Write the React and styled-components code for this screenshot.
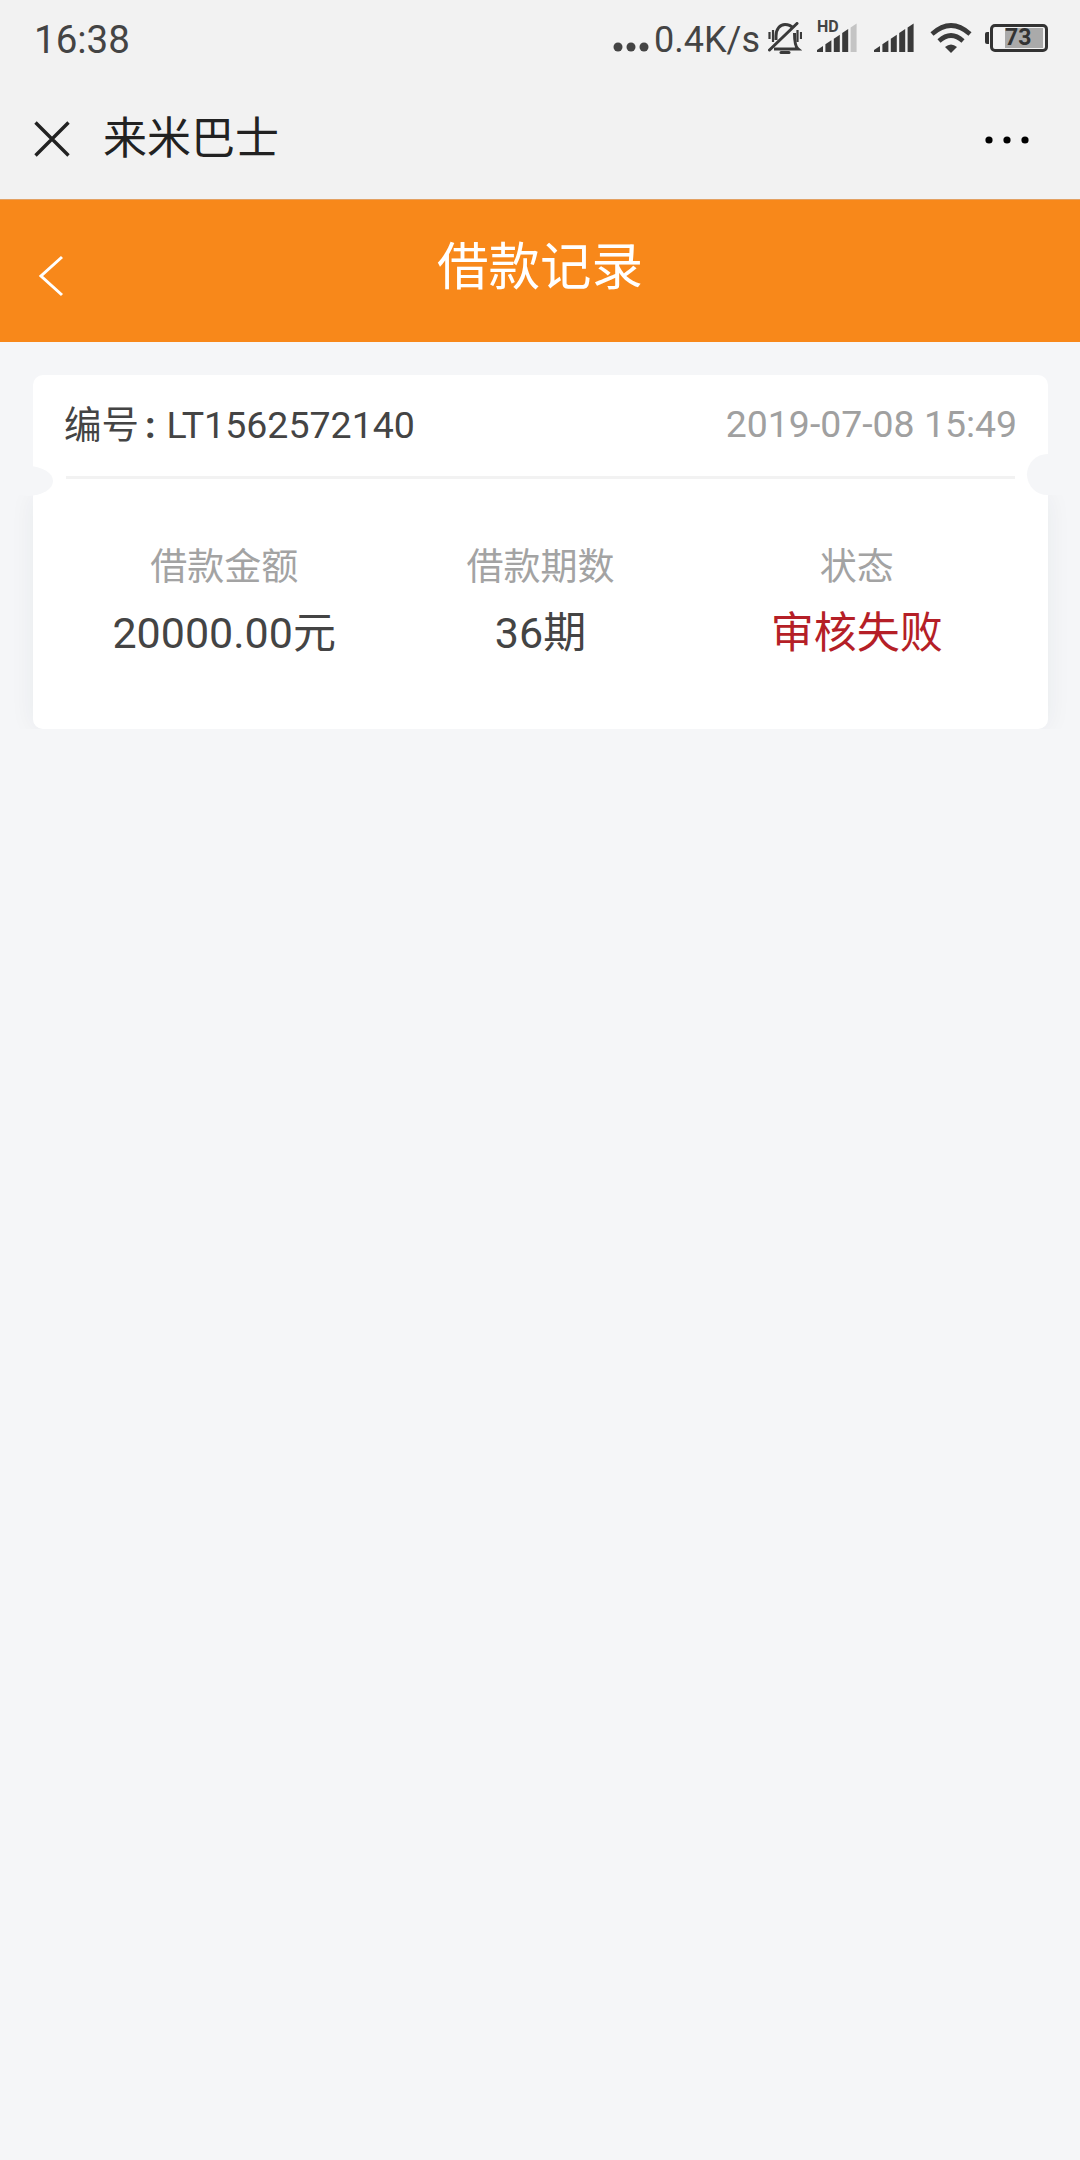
import React from "react";
import styled, { createGlobalStyle } from "styled-components";

const GlobalStyle = createGlobalStyle`
  html, body {
    margin: 0;
    padding: 0;
    background: #f5f6f8;
  }
  body {
    font-family: Roboto, "Noto Sans CJK SC", sans-serif;
  }
`;

const Page = styled.div`
  width: 1080px;
  min-height: 2160px;
  background: #f5f6f8;
  overflow: hidden;
`;

const TopArea = styled.div`
  background: #f2f2f2;
  height: 199px;
  display: flex;
  flex-direction: column;
`;

const StatusBar = styled.div`
  height: 80px;
  display: flex;
  align-items: center;
  justify-content: space-between;
  padding: 0 32px 0 34px;
  color: #444;
`;

const Clock = styled.div`
  font-size: 38.5px;
  line-height: 80px;
`;

const StatusIcons = styled.div`
  display: flex;
  align-items: center;
  height: 80px;
`;

const Speed = styled.span`
  font-size: 36px;
  line-height: 80px;
  margin-left: 5px;
`;

const Glyph = styled.svg`
  display: block;
  flex: none;
  margin-left: ${(p) => p.$ml || 0}px;
  margin-top: ${(p) => p.$mt || 0}px;
`;

const HdSignal = styled.div`
  position: relative;
  margin-left: 15px;
  width: 41px;
  height: 30px;
  margin-top: -4px;
`;

const HdTag = styled.span`
  position: absolute;
  left: 0;
  top: -3px;
  font-size: 16px;
  line-height: 14px;
  font-weight: 700;
  color: #444;
`;

const BatteryWrap = styled.div`
  display: flex;
  align-items: center;
  margin-left: 13px;
  margin-top: -5px;
`;

const BatteryNub = styled.div`
  width: 4px;
  height: 12px;
  background: #333;
  border-radius: 2px 0 0 2px;
  margin-right: 1px;
`;

const BatteryBody = styled.div`
  box-sizing: border-box;
  width: 58px;
  height: 28px;
  border: 3px solid #333;
  border-radius: 5px;
  display: flex;
  align-items: center;
  justify-content: flex-end;
  padding-right: 2px;
`;

const BatteryFill = styled.div`
  width: 38px;
  height: 20px;
  background: #aaa;
  color: #333;
  font-size: 23px;
  line-height: 20px;
  font-weight: 700;
`;

const NavRow = styled.div`
  flex: 1;
  display: flex;
  align-items: center;
  padding: 0 51px 0 34px;
  margin-top: -2px;
`;

const NavTitle = styled.div`
  flex: 1;
  margin-left: 33px;
  font-size: 44px;
  line-height: 60px;
  color: #222;
`;

const OrangeBar = styled.div`
  position: relative;
  height: 143px;
  box-sizing: border-box;
  border-top: 1px solid #e3a163;
  background: #f8881a;
  display: flex;
  justify-content: center;
  padding-top: 35px;
`;

const BarTitle = styled.div`
  font-size: 51.5px;
  line-height: 66px;
  color: #fff;
`;

const BackIcon = styled.svg`
  position: absolute;
  left: 38px;
  top: 55px;
`;

const Card = styled.div`
  position: relative;
  isolation: isolate;
  margin: 33px 32px 0 33px;
`;

const CardHead = styled.div`
  position: relative;
  z-index: 1;
  background: #fff;
  border-radius: 10px 10px 0 0;
  height: 102px;
  display: flex;
  align-items: center;
  justify-content: space-between;
  padding: 0 31px 0 31px;
`;

const Serial = styled.div`
  font-size: 37.5px;
  line-height: 50px;
  color: #444;
  margin-top: -2px;
`;

const Colon = styled.span`
  font-weight: 700;
  margin: 0 11px 0 6px;
`;

const DateText = styled.div`
  font-size: 37.4px;
  line-height: 50px;
  color: #a0a0a0;
  margin-top: -4px;
`;

const Divider = styled.div`
  position: absolute;
  left: 33px;
  right: 33px;
  top: 101px;
  height: 3px;
  background: #f2f2f2;
  z-index: 2;
`;

const Notch = styled.div`
  position: absolute;
  z-index: 3;
  background: #f5f6f8;
  border-radius: 50%;
  top: ${(p) => p.$top}px;
  height: ${(p) => p.$size}px;
  width: ${(p) => p.$w}px;
  ${(p) => (p.$side === "left" ? "left: -30px;" : "right: -20px;")}
`;

const CardBody = styled.div`
  background: #fff;
  border-radius: 0 0 10px 10px;
  height: 252px;
  box-sizing: border-box;
  padding: 66px 33px 0;
  display: grid;
  grid-template-columns: repeat(3, 1fr);

  /* soft side shadow, only below the notches */
  &::before {
    content: "";
    position: absolute;
    z-index: -1;
    left: 0;
    right: 0;
    top: 120px;
    bottom: 0;
    border-radius: 0 0 10px 10px;
    box-shadow: 0 0 26px rgba(40, 50, 70, 0.06);
    clip-path: inset(0 -40px 0 -40px);
  }
`;

const Col = styled.div`
  text-align: center;
`;

const ColLabel = styled.div`
  font-size: 37px;
  line-height: 50px;
  color: #a3a3a3;
`;

const ColValue = styled.div`
  font-size: 43px;
  line-height: 56px;
  margin-top: 12px;
  color: ${(p) => (p.$failed ? "#b51f27" : "#444")};
`;

// signal bars share one slope, the left one is only a small wedge
const barPoints = (i) => {
  const x0 = i * 8.4;
  const x1 = x0 + 6;
  const top = (x) => 27 - x * 0.67;
  return `${x0},29 ${x0},${top(x0)} ${x1},${top(x1)} ${x1},29`;
};

const SignalBars = ({ lastColor }) => (
  <svg width="41" height="30" viewBox="0 0 41 30" style={{ display: "block" }}>
    {[0, 1, 2, 3, 4].map((i) => (
      <polygon key={i} points={barPoints(i)} fill={i === 4 && lastColor ? lastColor : "#3a3a3a"} />
    ))}
  </svg>
);

const records = [
  { label: "借款金额", value: "20000.00元" },
  { label: "借款期数", value: "36期" },
  { label: "状态", value: "审核失败", failed: true },
];

export default function App() {
  return (
    <Page>
      <GlobalStyle />
      <TopArea>
        <StatusBar>
          <Clock>16:38</Clock>
          <StatusIcons>
            <Glyph width="36" height="10" viewBox="0 0 36 10" $mt={13}>
              <circle cx="5" cy="5" r="4.5" fill="#444" />
              <circle cx="18" cy="5" r="4.5" fill="#444" />
              <circle cx="31" cy="5" r="4.5" fill="#444" />
            </Glyph>
            <Speed>0.4K/s</Speed>
            <Glyph width="34" height="32" viewBox="0 0 34 32" $ml={8} $mt={-4} fill="none" stroke="#3a3a3a">
              <path d="M1.5 28 L29 1.5" strokeWidth="3" strokeLinecap="round" />
              <path d="M8 18 V14 C8 7 12 2.5 17 2.5 C20 2.5 23 3.5 25 6" strokeWidth="3" />
              <path d="M6 27 H30 C27.5 25 26.5 21 26.5 11" strokeWidth="3" />
              <path d="M13 30.4 H21" strokeWidth="3" strokeLinecap="round" />
              <path d="M1.5 10 V17 M5 8 V20 M29.5 8 V20 M33 10 V17" strokeWidth="2.2" />
            </Glyph>
            <HdSignal>
              <HdTag>HD</HdTag>
              <SignalBars lastColor="#c4c4c4" />
            </HdSignal>
            <Glyph as="div" $ml={16} $mt={-4}>
              <SignalBars />
            </Glyph>
            <Glyph width="42" height="31" viewBox="0 0 42 31" $ml={15} $mt={-4} fill="none" stroke="#3a3a3a">
              <path d="M2 11 Q21 -6 40 11" strokeWidth="4.6" />
              <path d="M9 18 Q21 7 33 18" strokeWidth="4.6" />
              <path d="M15 24 Q21 19 27 24 L21 30 Z" fill="#3a3a3a" stroke="none" />
            </Glyph>
            <BatteryWrap>
              <BatteryNub />
              <BatteryBody>
                <BatteryFill>73</BatteryFill>
              </BatteryBody>
            </BatteryWrap>
          </StatusIcons>
        </StatusBar>
        <NavRow>
          <Glyph width="36" height="36" viewBox="0 0 36 36" fill="none" stroke="#222">
            <path d="M1.5 1.5 L34.5 34.5 M34.5 1.5 L1.5 34.5" strokeWidth="3.4" />
          </Glyph>
          <NavTitle>来米巴士</NavTitle>
          <Glyph width="44" height="8" viewBox="0 0 44 8" $mt={2} fill="#000">
            <circle cx="4" cy="4" r="3.6" />
            <circle cx="22" cy="4" r="3.6" />
            <circle cx="40" cy="4" r="3.6" />
          </Glyph>
        </NavRow>
      </TopArea>

      <OrangeBar>
        <BackIcon width="26" height="42" viewBox="0 0 26 42" fill="none" stroke="#fff">
          <path d="M24 2 L3 21 L24 40" strokeWidth="3" />
        </BackIcon>
        <BarTitle>借款记录</BarTitle>
      </OrangeBar>

      <Card>
        <CardHead>
          <Serial>
            编号<Colon>:</Colon>LT1562572140
          </Serial>
          <DateText>2019-07-08 15:49</DateText>
        </CardHead>
        <Divider />
        <Notch $side="left" $top={91} $size={30} $w={50} />
        <Notch $side="right" $top={79} $size={41} $w={41} />
        <CardBody>
          {records.map((r) => (
            <Col key={r.label}>
              <ColLabel>{r.label}</ColLabel>
              <ColValue $failed={r.failed}>{r.value}</ColValue>
            </Col>
          ))}
        </CardBody>
      </Card>
    </Page>
  );
}
